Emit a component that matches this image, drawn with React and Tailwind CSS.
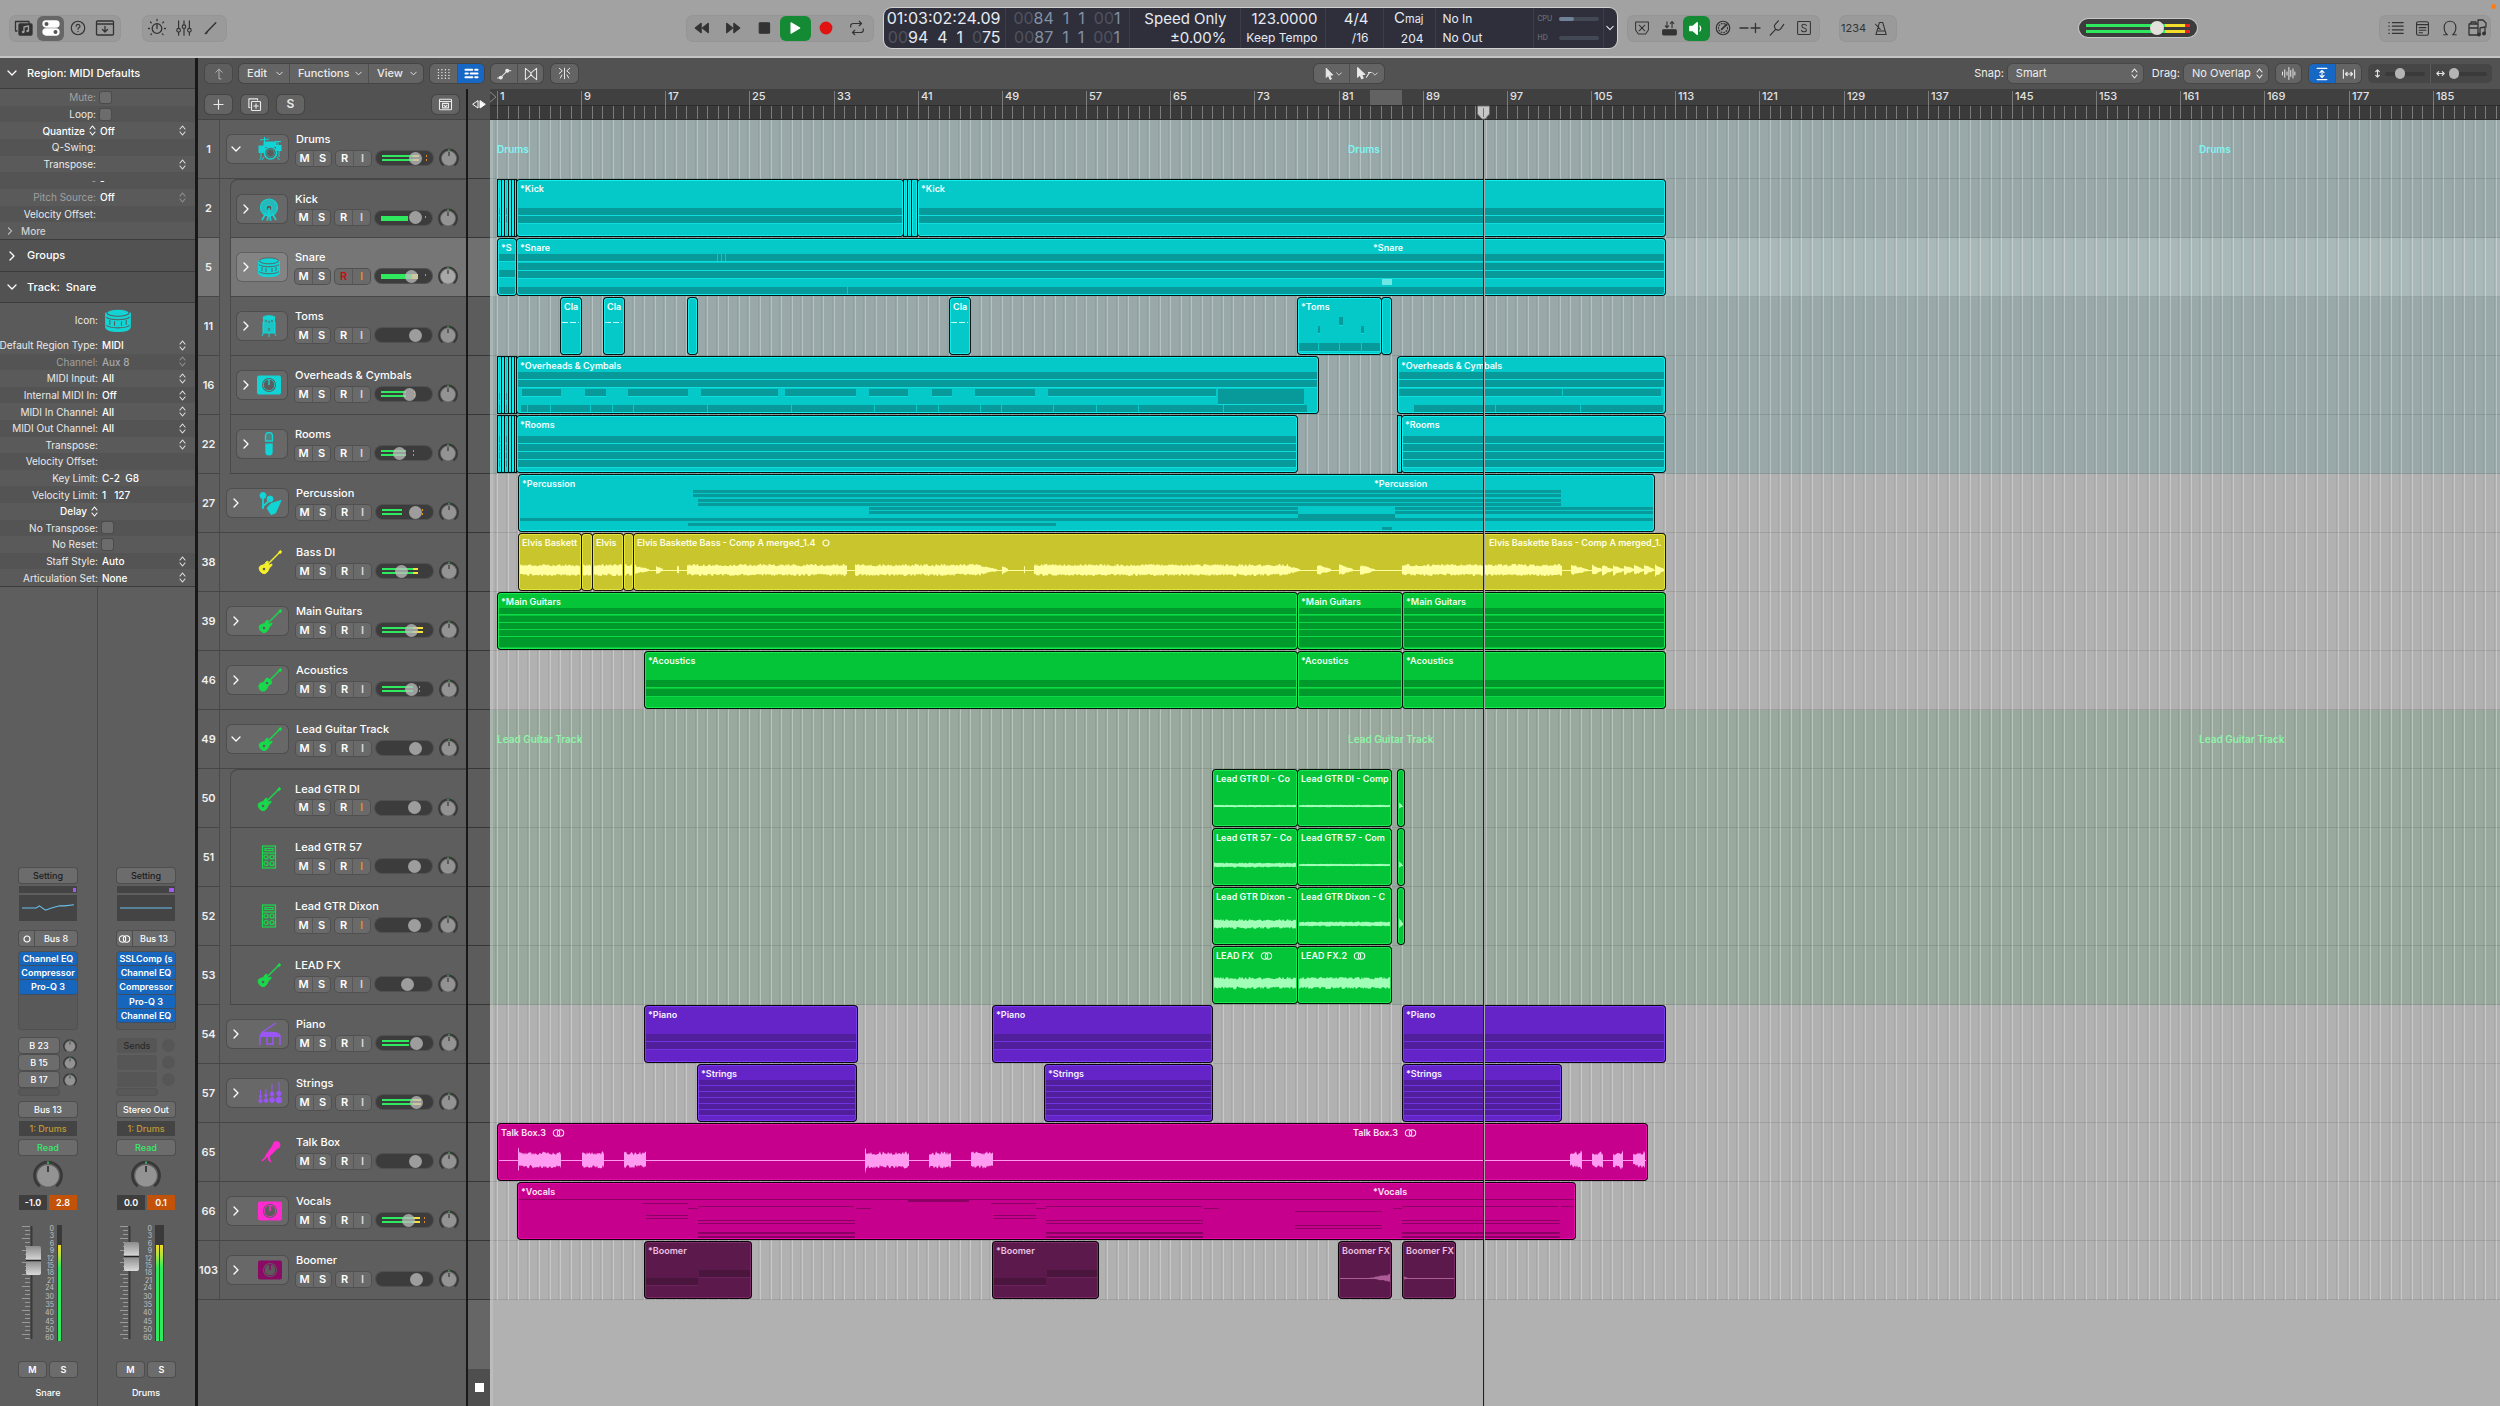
import React from "react";

/* ---------- timeline geometry ---------- */
const BAR = 10.52;
const barX = (b) => Math.round(7 + (b - 1) * BAR);
const BARS = Array.from({ length: 191 }, (_, i) => i + 1);
const TILE = 851;

/* ---------- small glyphs ---------- */
const S = ({ w = 16, h, vb, className = "", sw = 1.3, children }) => (
  <svg width={w} height={h || w} viewBox={vb || "0 0 20 20"} className={"shrink-0 " + className} fill="none" stroke="currentColor" strokeWidth={sw} strokeLinecap="round" strokeLinejoin="round" aria-hidden="true">
    {children}
  </svg>
);
const ChevD = ({ w = 10, className }) => <S w={w} vb="0 0 10 10" className={className}><path d="M1 3l4 4 4-4" /></S>;
const ChevR = ({ w = 10, className }) => <S w={w} vb="0 0 10 10" className={className}><path d="M3 1l4 4-4 4" /></S>;
const UpDown = ({ className }) => <S w={7} h={11} vb="0 0 7 11" sw={1.1} className={className}><path d="M1 4l2.500-3L6 4M1 7l2.500 3L6 7" /></S>;
const Stereo = () => <S w={13} h={8} vb="0 0 13 8" sw={1.1}><circle cx="4.500" cy="4" r="3.200" /><circle cx="8.500" cy="4" r="3.200" /></S>;
const Mono = () => <S w={8} h={8} vb="0 0 8 8" sw={1.2}><circle cx="4" cy="4" r="3" /></S>;

const G = {
  library: <S w={20}><path d="M3 13H1.500V3.500H15V6" /><rect x="5" y="6" width="13" height="11" rx="1" fill="currentColor" /><path d="M10 14V9l4.500-1v5" stroke="#a0a0a0" /><circle cx="9" cy="14" r="1.200" fill="#a0a0a0" stroke="none" /><circle cx="13.500" cy="13" r="1.200" fill="#a0a0a0" stroke="none" /></S>,
  inspector: <S w={20}><rect x="2" y="3" width="16" height="6" rx="3" fill="currentColor" /><circle cx="5.500" cy="6" r="2" fill="#555" stroke="none" /><rect x="2" y="11" width="16" height="6" rx="3" fill="currentColor" /><circle cx="14.500" cy="14" r="2" fill="#555" stroke="none" /></S>,
  help: <S w={18}><circle cx="10" cy="10" r="7.500" /><path d="M8 8c0-2.800 4.200-2.600 4.200 0 0 1.500-2.200 1.600-2.200 3.300M10 13.800v.200" /></S>,
  toolbar: <S w={20}><rect x="1.500" y="3" width="17" height="14" rx="1" /><path d="M2 6h16M10 8.500v5M7.500 11.500l2.500 2.500 2.500-2.500" /></S>,
  dial: <S w={20}><circle cx="10" cy="10.500" r="4.800" /><path d="M10 6v4.500M10 1.500v1M16.500 4l-.700.700M3.500 4l.700.700M18.500 10.500h-1M1.500 10.500h1M16 16.500l-.600-.600M4 16.500l.600-.600" /></S>,
  mixer: <S w={18}><path d="M4 2v8M4 15v3M10 2v4M10 11v7M16 2v8M16 15v3" /><circle cx="4" cy="12.500" r="2" /><circle cx="10" cy="8.500" r="2" /><circle cx="16" cy="12.500" r="2" /></S>,
  pencil: <S w={16} sw={1.800}><path d="M3 17L16 3.500M3 17l2-1" /></S>,
  rew: <S w={16}><path d="M9 4v12L1.500 10zM18 4v12L10.500 10z" fill="currentColor" /></S>,
  ffw: <S w={16}><path d="M11 4v12l7.500-6zM2 4v12l7.500-6z" fill="currentColor" /></S>,
  stop: <S w={16}><rect x="4" y="3.500" width="13" height="13" rx="1" fill="currentColor" /></S>,
  play: <S w={16}><path d="M5 3.500v13L16 10z" fill="currentColor" /></S>,
  rec: <S w={16}><circle cx="10" cy="10" r="8" fill="#e01212" stroke="none" /></S>,
  cycle: <S w={18}><path d="M3 9V7.500Q3 5 6 5h9M12.500 2.500L15 5l-2.500 2.500M17 11v1.500q0 2.500-3 2.500H5M7.500 12.500L5 15l2.500 2.500" /></S>,
  replace: <S w={16}><path d="M2 2.500h16v10l-3.500 5h-9L2 12.500zM6.500 6.500l7 7M13.500 6.500l-7 7" /></S>,
  input: <S w={17}><rect x="2" y="11.500" width="16" height="6" rx="1" fill="currentColor" /><path d="M7 2v7M5 7l2 2 2-2M13 9V2M11 4l2-2 2 2" /></S>,
  speaker: <S w={17}><path d="M2 7.500h3.500L11 3v14l-5.500-4.500H2z" fill="currentColor" /><path d="M14 7q2 3 0 6" /></S>,
  tuner: <S w={18}><circle cx="10" cy="10" r="7.500" /><circle cx="10" cy="10" r="5" strokeDasharray="1 2" /><path d="M8.500 11.500L14 6" strokeWidth="2" /></S>,
  plusminus: <S w={22} h={16} vb="0 0 22 16"><path d="M1 8h8M12 8h9M16.500 3.500v9" /></S>,
  fork: <S w={18}><path d="M2.500 18l6-6.500M8.500 11.500Q6 8 8 6l3.500-4M8.500 11.500q3.500 2 5.500-.500L17.500 6" /></S>,
  solo: <S w={16}><rect x="2" y="2" width="16" height="16" rx="1" /><path d="M13 7q-1-1.800-3-1.800c-3.500 0-3.500 4.200 0 4.700 4 .600 4 4.900 0 4.900q-2.400 0-3.200-2" /></S>,
  metro: <S w={17}><path d="M7.500 3h4l4 14h-12zM6 13h8M8.500 11L3 5" /></S>,
  list: <S w={18}><path d="M2 4h.500M2 8h.500M2 12h.500M2 16h.500M6 4h12M6 8h12M6 12h12M6 16h12" /></S>,
  note: <S w={17}><rect x="3" y="2" width="14" height="16" rx="2" /><path d="M3.500 5.500h13M6 9h8M6 12h8M6 15h4" /></S>,
  loop: <S w={18}><path d="M3 17.500h4Q3.500 14.500 3.500 9.500C3.500 5 6.500 2.500 10 2.500s6.500 2.500 6.500 7q0 5-3.500 8h4" /></S>,
  browser: <S w={20}><path d="M2 6h9v11H2zM4 6V4h5v2M11 5V2h5l3 3v4M2 10h9" /><path d="M13 16V10l5-1v6" /><circle cx="12" cy="16.500" r="1.300" fill="currentColor" /><circle cx="17" cy="15.500" r="1.300" fill="currentColor" /></S>,
  up: <S w={14}><path d="M13 17h-3V3M5.500 7.500L10 3l4.500 4.500" /></S>,
  grid: <S w={14} sw={2}><path d="M2 4h.1M7 4h.1M12 4h.1M17 4h.1M2 8h.1M7 8h.1M12 8h.1M17 8h.1M2 12h.1M7 12h.1M12 12h.1M17 12h.1M2 16h.1M7 16h.1M12 16h.1M17 16h.1" /></S>,
  blocks: <S w={15} sw={2.800}><path d="M2 5h9M15 5h3M2 10h3M9 10h9M2 15h9M15 15h3" /></S>,
  auto: <S w={16}><path d="M2 15h3.500L14 6h4.500" /><circle cx="6" cy="14.500" r="1.800" fill="currentColor" /><circle cx="14" cy="6" r="1.800" fill="currentColor" /></S>,
  flex: <S w={16}><path d="M3 3v14M17 3v14M3 3q7 5 7 7t-7 7M17 3q-7 5-7 7t7 7" /></S>,
  catch: <S w={15}><path d="M10 3v14M3 3l4 3.500L3 10M17 3l-4 3.500 4 3.500M6.500 12l-2 4M13.500 12l2 4" /></S>,
  arrow: <S w={14}><path d="M6 2v13l3-3 2.500 6 2-1-2.500-5.500h4z" fill="currentColor" /></S>,
  marquee: <S w={16}><path d="M2 2v12l3-3 2 5 2-1-2-4.500h4z" fill="currentColor" /><path d="M13 14l4-6M15.500 8H19" /></S>,
  wave: <S w={15}><path d="M2 8v4M5 5v10M8 8v4M10.500 2v16M13 6v8M16 4v12M18.500 8v4" /></S>,
  vzoom: <S w={14} sw={1.600}><path d="M3 2h14M3 18h14M10 5v10M7 8l3-3 3 3M7 12l3 3 3-3" /></S>,
  hzoom: <S w={14} sw={1.600}><path d="M2 4v12M18 4v12M5 10h10M7.500 7.500L5 10l2.500 2.500M12.500 7.500L15 10l-2.500 2.500" /></S>,
  plus: <S w={13} sw={1.800}><path d="M10 3v14M3 10h14" /></S>,
  dup: <S w={15} sw={1.500}><path d="M4 14H2.500V2.500H14V4" /><rect x="6" y="6" width="12" height="12" rx="1" /><path d="M12 9v6M9 12h6" /></S>,
  hide: <S w={15} sw={1.500}><rect x="2" y="3" width="16" height="14" rx="1" /><path d="M2 6h16" /><rect x="6" y="8.500" width="8" height="6" /><path d="M8 11l2 2 2-2" /></S>,
};

/* ---------- instrument drawings ---------- */
const Inst = ({ kind, color, big }) => {
  const p = { fill: color, stroke: color };
  const hole = "#5c5c5c";
  let d = null;
  if (kind === "kit") d = (<g {...p} strokeWidth="1"><path d="M2 3l9-1M6.500 0v5M17 4.500h6M20 5v4" fill="none" /><rect x="6" y="5" width="5.500" height="4.500" /><rect x="12.500" y="5" width="5.500" height="4.500" /><rect x="1" y="9" width="6" height="6.500" /><rect x="18.500" y="8.500" width="4.500" height="5" /><circle cx="12.500" cy="16" r="6" fill={hole} strokeWidth="1.600" /><circle cx="12.500" cy="16" r="4" fill="none" strokeWidth=".5" /><path d="M3 16v5l-1.500 2M6 20l-2 3M19 20l2.500 3M21 13v7" fill="none" /></g>);
  if (kind === "kick") d = (<g {...p}><circle cx="12" cy="10.500" r="8.500" fillOpacity=".75" strokeWidth="1.200" /><circle cx="12" cy="11" r="3" fill={hole} /><path d="M12 11v9M9 16l-4 7M15 16l4 7M9.500 23h1l1-6h1l1 6h1" fill="none" strokeWidth="1.700" /></g>);
  if (kind === "snare") d = (<g {...p}><path d="M1.500 6v12c0 5 21 5 21 0V6z" /><path d="M2 9.500c3 3 17 3 20 0M2 16.500c3 3 17 3 20 0M5 12v4M9 13v4M15 13v4M19 12v4" stroke={hole} fill="none" strokeWidth=".9" /><ellipse cx="12" cy="5.800" rx="9.500" ry="3" stroke={hole} strokeWidth=".9" /></g>);
  if (kind === "tom") d = (<g {...p}><rect x="6.500" y="4" width="11" height="15" fillOpacity=".85" /><ellipse cx="12" cy="3.500" rx="6" ry="1.800" /><path d="M9 6v2M12 7v2M12 14v3M15 6v2" stroke={hole} /><path d="M6 8v12l-1 2M18 8v12l1 2M12 19v4" fill="none" /></g>);
  if (kind === "knob") d = (<g><rect x="0" y="2.500" width="24" height="19" rx="2" fill={color} /><circle cx="12" cy="12" r="7" fill={hole} /><circle cx="12" cy="12" r="5.700" fill={hole} stroke={color} strokeWidth=".8" /><path d="M12 6.500V12" stroke={color} strokeWidth="1.500" /></g>);
  if (kind === "mic") d = (<g {...p}><path d="M8.500 9V4q0-3.500 3.500-3.500T15.500 4v5z" fillOpacity=".25" strokeWidth="1.300" /><path d="M8.300 11.500h7.400V20q0 3.500-3.700 3.500T8.300 20z" stroke="none" /></g>);
  if (kind === "perc") d = (<g {...p}><circle cx="5" cy="4.500" r="3" /><circle cx="12" cy="8" r="3" /><path d="M5 7v11M11 10l-7 6" strokeWidth="1.800" /><path d="M9 17l4-4.500 10-3-5.500 12.500-4.500 1.500z" /></g>);
  if (kind === "guitar" || kind === "acoustic") d = (<g {...p}><path d="M9 15L22 2" strokeWidth="1.500" /><path d="M20.500 2l2-1.500 1.200 1.200-1.500 2z" /><path d={kind === "guitar" ? "M1 18q1-3 4-3 2 0 3-3l2-1-.500 3 2 1 2.500-1q.500 2-2 3-1.500 2-2 4-2 3.500-5 2.500Q1.500 22 1 18z" : "M.800 18q.500-3.500 4-3.500 2 0 2.500-3 1.500-2.500 4-.500t2.500 3.500q-.500 2-3 2.500-1.500 2-2 4-2 3-5 2T.800 18z"} /><circle cx={kind === "guitar" ? 6 : 9} cy={kind === "guitar" ? 19 : 15} r="1.300" fill={hole} stroke="none" /></g>);
  if (kind === "amp") d = (<g {...p} strokeWidth="1.200"><rect x="5.500" y="1" width="13" height="22" fillOpacity=".15" /><path d="M5 8h14" /><path d="M8 3.500h8v2H8z" fill="none" /><circle cx="9" cy="12" r="2" fill="none" /><circle cx="15" cy="12" r="2" fill="none" /><circle cx="9" cy="18.500" r="2" fill="none" /><circle cx="15" cy="18.500" r="2" fill="none" /></g>);
  if (kind === "piano") d = (<g {...p}><path d="M3 11L18 1M7 10.500h7M2 14v9M22 13v10M9 15v8M15 15v8M9 22h6" fill="none" strokeWidth="1.500" /><path d="M2 12l3-2h13l4 2v3H2z" stroke="none" /></g>);
  if (kind === "strings") d = (<g {...p}><path d="M2.500 9v12M8 8v12M14 3v17M21 1v19" strokeWidth="1" /><circle cx="2.500" cy="15.500" r="1.200" /><circle cx="2.500" cy="20" r="1.700" /><circle cx="8" cy="14.500" r="1.300" /><circle cx="8" cy="19.500" r="1.900" /><circle cx="14" cy="13" r="1.900" /><circle cx="14" cy="19" r="2.400" /><circle cx="21" cy="12.500" r="2.200" /><circle cx="21" cy="19" r="2.900" /></g>);
  if (kind === "vox") d = (<g {...p}><circle cx="18.500" cy="5" r="3.500" /><path d="M15 6l3 3-8 8-2-1zM10 15l-6 6M11 14v6l2 2" strokeWidth="1.700" /></g>);
  return <svg width={big ? 28 : 24} height={big ? 28 : 24} viewBox="0 0 24 24" className="shrink-0" aria-hidden="true">{d}</svg>;
};

/* ---------- palettes ---------- */
const PAL = {
  cyan: { fill: "#05c9c9", dark: "#089a9a", light: "#14ecec", wave: "#c4ffff", text: "#f4ffff", icon: "#12d4d4" },
  yellow: { fill: "#c8c62c", dark: "#9d9b1c", light: "#e6e43a", wave: "#ffffa2", text: "#ffffe6", icon: "#f4ee2a" },
  green: { fill: "#04c437", dark: "#00992b", light: "#16ea50", wave: "#a2ffb8", text: "#f0fff2", icon: "#19d84b" },
  purple: { fill: "#6524c8", dark: "#511f9c", light: "#7a3cee", wave: "#d0b4ff", text: "#f6f0ff", icon: "#9a55f5" },
  pink: { fill: "#c6008c", dark: "#8c0065", light: "#e60aa6", wave: "#ff9cf2", text: "#ffe6f8", icon: "#ff2bd0" },
  plum: { fill: "#5c1a4c", dark: "#4a163e", light: "#7c2a68", wave: "#ac5c96", text: "#ecc0e2", icon: "#8a0a66" },
};

/* ---------- note bands: [x, y, width, height], x in timeline pixels ---------- */
const W = 4000;
const full = (ys, h = 7) => ys.map((y) => [0, y, W, h]);
const split = (stops, y, h) => stops.slice(0, -1).map((s, i) => [s + 1, y, stops[i + 1] - s - 1, h]);
const slivers = [[7, 4], [11, 3], [14, 4], [18, 3], [21, 3], [24, 2]];

const kickN = full([29, 37]);
const snareN = [...full([16, 25, 33]), ...full([49])];
const ohN = [...full([16, 24]),
  ...[[31, 70], [94, 115], [137, 197], [210, 287], [294, 365], [378, 417], [441, 461], [484, 544], [557, 725]].map(([a, b]) => [a, 33, b - a, 7]),
  [727, 33, 86, 15], ...split([29, 36, 59, 99, 121, 142, 216, 300, 383, 425, 447, 489, 510, 562, 605, 647, 732, 816], 49, 7)];
const oh2N = [...full([16, 24]), ...split([907, 1071, 1170], 33, 7), ...split([922, 1004, 1089, 1172], 49, 7)];
const roomN = full([21, 29, 37, 45]);
const percN = [[202, 16, 868, 3], [202, 20, 868, 3], [207, 25, 863, 3], [207, 29, 863, 3],
  [378, 33, 429, 3], [378, 37, 429, 3], [904, 33, 300, 3], [904, 37, 300, 3], [807, 40, 97, 4], [0, 44, W, 3], [197, 49, 368, 3], [891, 53, 10, 3]];
const mainN = full([16, 24, 31, 38, 45, 51], 6).map(([x, y, w], i) => [x, y, w, i === 5 ? 4 : 6]);
const acN = full([29, 38]);
const pianoN = full([29, 37]);
const strN = full([16, 22, 28, 34, 40, 46], 5);
const vocPhrase = (o) => [[o, 21, 45, 1], [o + 3, 33, 42, 1], [o + 3, 36, 42, 1], [o + 45, 26, 10, 1], [o + 55, 24, 156, 1], [o + 55, 38, 157, 1], [o + 55, 41, 157, 1], [o + 55, 50, 157, 2], [o + 55, 54, 157, 2], [o + 213, 26, 15, 1]];
const vocN = [[0, 17, W, 1], ...vocPhrase(152), [417, 18, 61, 2], ...vocPhrase(500), [804, 29, 87, 1], [804, 43, 87, 1], [804, 46, 87, 1], [902, 26, 9, 1],
  [911, 24, 156, 1], [911, 38, 158, 1], [911, 41, 158, 1], [911, 50, 158, 2], [911, 54, 158, 2], [1070, 24, 15, 1]];
const tomN = [[848, 20, 4, 8], [827, 29, 2, 7], [870, 29, 3, 7], ...split([807, 827, 848, 870, 890], 46, 8)];
const boomN = (o) => [[o, 37, 52, 7], [o + 53, 29, 54, 7]];

/* ---------- wave segments: [x0, x1, startAmp, endAmp] ---------- */
const bassW = [[29, 145, 5, 5], [145, 158, 4, 1], [165, 172, 4, 1], [186, 188, 4, 4], [196, 356, 5, 5], [364, 490, 5, 5], [490, 506, 4, 1], [511, 517, 4, 1], [533, 534, 4, 4],
  [543, 797, 5, 5], [797, 809, 4, 1], [826, 840, 5, 1], [848, 862, 5, 1], [869, 884, 5, 1], [911, 1071, 5, 5], [1080, 1097, 5, 1], [1101, 1111, 5, 1], [1111, 1122, 5, 1], [1122, 1133, 5, 1], [1133, 1143, 5, 1], [1143, 1153, 5, 1], [1153, 1163, 5, 1], [1164, 1173, 6, 1]];
const talkW = [[27, 28, 13, 13], [27, 70, 7, 7], [91, 113, 7, 7], [133, 155, 7, 7], [374, 375, 13, 13], [374, 418, 7, 7], [438, 460, 7, 7], [480, 502, 7, 7], [1079, 1091, 6, 8], [1101, 1112, 6, 7], [1122, 1132, 6, 8], [1142, 1154, 5, 8]];

const R = (x0, x1, label, extra = {}) => ({ x0, x1, label, ...extra });
const sl = (notes) => slivers.map(([x, w]) => R(x, x + w, "", { notes, thin: true }));

const TRACKS = [
  { n: 1, name: "Drums", icon: "kit", pal: "cyan", open: true, knob: 39, g: 37, y: 43, dot: 50, tint: "cyan", stack: "Drums", regions: [] },
  { n: 2, name: "Kick", icon: "kick", pal: "cyan", child: 1, arrow: true, knob: 41, g: 33, mono: true, dot: 50, tint: "cyan", regions: [...sl(kickN), R(26, 413, "*Kick", { notes: kickN }), R(413, 417, "", { thin: true }), R(417, 421, "", { thin: true }), R(421, 427, "", { thin: true }), R(427, 1175, "*Kick", { notes: kickN })] },
  { n: 5, name: "Snare", icon: "snare", pal: "cyan", child: 1, arrow: true, sel: true, knob: 37, g: 37, y: 43, mono: true, dot: 50, tint: "sel", regions: [R(7, 26, "*S", { notes: full([16, 32, 49]) }), R(26, 1175, "*Snare", { notes: snareN, again: [883, "*Snare"], lite: [[891, 41, 10, 6], [226, 16, 1, 7], [230, 16, 1, 7], [234, 16, 1, 7], [356, 49, 1, 7]] })] },
  { n: 11, name: "Toms", icon: "tom", pal: "cyan", child: 1, arrow: true, knob: 41, tint: "cyan", regions: [R(70, 91, "Cla", { dash: true }), R(113, 134, "Cla", { dash: true }), R(197, 207, ""), R(459, 480, "Cla", { dash: true }), R(807, 891, "*Toms", { notes: tomN }), R(891, 901, "")] },
  { n: 16, name: "Overheads & Cymbals", icon: "knob", pal: "cyan", child: 1, arrow: true, knob: 34, g: 31, dot: 39, tint: "cyan", regions: [...sl(full([37, 49])), R(26, 828, "*Overheads & Cymbals", { notes: ohN }), R(907, 1175, "*Overheads & Cymbals", { notes: oh2N })] },
  { n: 22, name: "Rooms", icon: "mic", pal: "cyan", child: 1, arrow: true, knob: 24, g: 31, dot: 38, tint: "cyan", regions: [...sl(roomN), R(26, 807, "*Rooms", { notes: roomN }), R(907, 911, "", { thin: true }), R(911, 1175, "*Rooms", { notes: roomN })] },
  { n: 27, name: "Percussion", icon: "perc", pal: "cyan", arrow: true, knob: 39, g: 26, dot: 46, regions: [R(28, 1164, "*Percussion", { notes: percN, again: [884, "*Percussion"] })] },
  { n: 38, name: "Bass DI", icon: "guitar", pal: "yellow", knob: 25, g: 37, y: 42, regions: [R(28, 91, "Elvis Baskett", { wave: bassW }), R(91, 102, "", { wave: bassW }), R(102, 133, "Elvis", { wave: bassW }), R(133, 143, "", { wave: bassW }), R(143, 1175, "Elvis Baskette Bass - Comp A merged_1.4", { wave: bassW, mark: "mono", again: [999, "Elvis Baskette Bass - Comp A merged_1."] })] },
  { n: 39, name: "Main Guitars", icon: "guitar", pal: "green", arrow: true, knob: 35, g: 37, y: 47, regions: [R(7, 807, "*Main Guitars", { notes: mainN }), R(807, 912, "*Main Guitars", { notes: mainN }), R(912, 1175, "*Main Guitars", { notes: mainN })] },
  { n: 46, name: "Acoustics", icon: "acoustic", pal: "green", arrow: true, knob: 35, g: 37, dot: 43, regions: [R(154, 807, "*Acoustics", { notes: acN }), R(807, 912, "*Acoustics", { notes: acN }), R(912, 1175, "*Acoustics", { notes: acN })] },
  { n: 49, name: "Lead Guitar Track", icon: "guitar", pal: "green", open: true, knob: 39, tint: "green", stack: "Lead Guitar Track", regions: [] },
  { n: 50, name: "Lead GTR DI", icon: "guitar", pal: "green", child: 1, knob: 39, hotI: true, tint: "green", regions: [R(722, 807, "Lead GTR DI - Co", { wave: [[722, 807, 1, 1]] }), R(807, 901, "Lead GTR DI - Comp", { wave: [[807, 902, 1, 1]] }), R(907, 914, "", { wave: [[908, 911, 3, 1]] })] },
  { n: 51, name: "Lead GTR 57", icon: "amp", pal: "green", child: 1, knob: 39, hotI: true, tint: "green", regions: [R(722, 807, "Lead GTR 57 - Co", { wave: [[722, 807, 2, 2]] }), R(807, 901, "Lead GTR 57 - Com", { wave: [[807, 902, 1, 1]] }), R(907, 914, "", { wave: [[908, 911, 3, 1]] })] },
  { n: 52, name: "Lead GTR Dixon", icon: "amp", pal: "green", child: 1, knob: 39, hotI: true, tint: "green", regions: [R(722, 807, "Lead GTR Dixon -", { wave: [[722, 807, 4, 4]] }), R(807, 901, "Lead GTR Dixon - C", { wave: [[807, 902, 2, 2]] }), R(907, 914, "", { wave: [[908, 912, 5, 1]] })] },
  { n: 53, name: "LEAD FX", icon: "guitar", pal: "green", child: 1, knob: 32, tint: "green", regions: [R(722, 807, "LEAD FX", { mark: "stereo", wave: [[723, 807, 5, 5]] }), R(807, 901, "LEAD FX.2", { mark: "stereo", wave: [[807, 901, 5, 5]] })] },
  { n: 54, name: "Piano", icon: "piano", pal: "purple", arrow: true, knob: 41, g: 33, regions: [R(154, 367, "*Piano", { notes: pianoN }), R(502, 722, "*Piano", { notes: pianoN }), R(912, 1175, "*Piano", { notes: pianoN })] },
  { n: 57, name: "Strings", icon: "strings", pal: "purple", arrow: true, knob: 41, g: 37, y: 45, regions: [R(207, 366, "*Strings", { notes: strN }), R(554, 722, "*Strings", { notes: strN }), R(912, 1071, "*Strings", { notes: strN })] },
  { n: 65, name: "Talk Box", icon: "vox", pal: "pink", knob: 39, regions: [R(7, 1157, "Talk Box.3", { mark: "stereo", wave: talkW, again: [863, "Talk Box.3"], again2: true })] },
  { n: 66, name: "Vocals", icon: "knob", pal: "pink", arrow: true, knob: 33, g: 37, y: 44, dot: 48, regions: [R(27, 1085, "*Vocals", { notes: vocN, again: [883, "*Vocals"] })] },
  { n: 103, name: "Boomer", icon: "knob", pal: "plum", arrow: true, knob: 41, regions: [R(154, 261, "*Boomer", { notes: boomN(155) }), R(502, 608, "*Boomer", { notes: boomN(503) }), R(848, 901, "Boomer FX", { wave: [[878, 901, 0, 4]] }), R(912, 965, "Boomer FX", { wave: [[912, 917, 2, 0]] })] },
];

/* ---------- regions ---------- */
const noise = (i) => {
  const v = Math.sin(i * 127.1 + 31.7) * 43758.5453;
  return v - Math.floor(v);
};
function wavePath(segs, x0, x1) {
  let d = "";
  segs.forEach(([a, b, p, q]) => {
    const s = Math.max(a, x0), e = Math.min(b, x1);
    if (e <= s) return;
    const top = [], bot = [];
    for (let x = s; x <= e; x++) {
      const t = b > a ? (x - a) / (b - a) : 0;
      const amp = p + (q - p) * t;
      top.push(`${x - x0},${(36 - amp * (0.7 + 0.55 * noise(x))).toFixed(1)}`);
      bot.unshift(`${x - x0},${(36 + amp * (0.7 + 0.55 * noise(x + 900))).toFixed(1)}`);
    }
    d += "M" + top.concat(bot).join("L") + "Z";
  });
  return d;
}

function Region({ r, pal }) {
  const c = PAL[pal];
  const w = r.x1 - r.x0;
  return (
    <div className={"absolute top-0 h-[58px] overflow-hidden border border-black/90 " + (r.thin ? "" : "rounded")} style={{ left: r.x0, width: w + 1, background: c.fill }}>
      <svg className="absolute inset-0" width={w} height="56" aria-hidden="true">
        {(r.notes || []).map(([x, y, nw, h], i) => {
          const s = Math.max(x - r.x0, 0);
          const e = Math.min(x + nw - r.x0, w);
          return e > s ? (
            <g key={i}>
              <rect x={s} y={y - 1} width={e - s} height={h} fill={c.dark} />
              {h > 4 && <rect x={s} y={y + h - 1} width={e - s} height="1" fill={c.light} opacity=".6" />}
            </g>
          ) : null;
        })}
        {(r.lite || []).map(([x, y, nw, h], i) => <rect key={i} x={x - r.x0} y={y - 1} width={nw} height={h} fill={nw > 4 ? "#6fe6e6" : c.fill} />)}
        {r.dash && <path d={`M1 24.500H${w - 3}`} stroke={c.wave} strokeDasharray="6 2" />}
        {r.wave && (
          <g>
            <path d={`M0 36.500H${w}`} stroke={c.wave} />
            <path d={wavePath(r.wave, r.x0, r.x1)} fill={c.wave} />
          </g>
        )}
      </svg>
      <div className="absolute inset-0 rounded-[3px] border" style={{ borderColor: c.light }} />
      {r.label && (
        <div className="relative flex items-center gap-1.5 whitespace-nowrap pl-[3px] pt-0.5 text-[9px] font-semibold leading-[13px]" style={{ color: c.text }}>
          <span>{r.label}</span>
          {r.mark === "mono" && <Mono />}
          {r.mark === "stereo" && <Stereo />}
        </div>
      )}
      {r.again && (
        <div className="absolute top-0 flex items-center gap-1.5 whitespace-nowrap pt-0.5 text-[9px] font-semibold leading-[13px]" style={{ left: r.again[0] - r.x0 - 1, color: c.text }}>
          <span>{r.again[1]}</span>
          {r.again2 && <Stereo />}
        </div>
      )}
    </div>
  );
}

/* ---------- track header ---------- */
const thumb = "absolute inset-0 m-0 h-full w-full appearance-none bg-transparent [&::-webkit-slider-thumb]:h-[13px] [&::-webkit-slider-thumb]:w-[13px] [&::-webkit-slider-thumb]:appearance-none [&::-webkit-slider-thumb]:rounded-full [&::-webkit-slider-thumb]:bg-[#bdbdbd]/75";

function Volume({ t }) {
  const lanes = t.mono ? [5] : [4, 8];
  return (
    <div className="relative h-[14px] w-[57px] overflow-hidden rounded-full bg-[#3c3c3c] ring-1 ring-[#505050]">
      {t.g && lanes.map((y) => (
        <div key={y} className={"absolute left-[6px] flex " + (t.mono ? "h-[5px]" : "h-[2px]")} style={{ top: y, width: (t.y || t.g) - 6 }}>
          <div className="bg-[#2fe95f]" style={{ width: t.g - 6 }} />
          <div className="flex-1 bg-[#f5e23a]" />
        </div>
      ))}
      {t.dot && lanes.map((y) => <div key={y} className="absolute h-[2px] w-px bg-[#e88a1e]" style={{ left: t.dot, top: y }} />)}
      <input type="range" aria-label={t.name + " volume"} min="0" max="100" step="any" defaultValue={((t.knob - 6.5) / 44) * 100} className={thumb} />
    </div>
  );
}

const Knob = ({ size = 20, sel }) => (
  <svg width={size} height={size} viewBox="0 0 20 20" className="shrink-0" aria-hidden="true">
    <path d="M4.500 17.500A9 9 0 1 1 15.500 17.500" fill="none" stroke="#383838" strokeWidth="1.800" />
    <circle cx="10" cy="10.500" r="7.200" fill={sel ? "#a8a8a8" : "#939393"} />
    <path d="M10 4v4" stroke="#222" strokeWidth="1" />
    <path d="M10 1v1.500" stroke="#3ad15f" strokeWidth="1" />
  </svg>
);

function Pair({ a, b, ca = "text-white", cb = "text-white" }) {
  return (
    <div className="flex h-[15px] w-[35px] overflow-hidden rounded-[4px] bg-[#6a6a6a] text-[11px] font-semibold leading-[15px] ring-1 ring-[#505050]">
      <button className={"flex-1 " + ca}>{a}</button>
      <div className="w-px bg-[#575757]" />
      <button className={"flex-1 " + cb}>{b}</button>
    </div>
  );
}

function TrackHeader({ t, first }) {
  const bg = t.sel ? "bg-[#767676]" : "bg-[#5e5e5e]";
  const framed = t.arrow || t.open;
  return (
    <div className="flex h-[59px]">
      <div className={"flex w-[21px] shrink-0 items-center justify-center border-b border-[#464646] text-[11px] font-semibold text-[#f0f0f0] " + bg}>{t.n}</div>
      <div className={"flex flex-1 border-l border-[#4a4a4a] bg-[#5e5e5e] " + (t.child ? "" : "border-b border-b-[#464646]")}>
        {t.child && <div className="w-[10px] shrink-0" />}
        <div className={"flex min-w-0 flex-1 items-center " + (t.child ? "border-b border-l border-b-[#464646] border-l-[#4a4a4a] pl-[6px] " : "pl-[7px] ") + (first ? "rounded-tl-lg border-t border-t-[#464646] " : "") + bg}>
          <div className={"flex h-[28px] shrink-0 items-center justify-between rounded-[5px] pl-1 pr-1.5 " + (t.child ? "w-[50px] " : "w-[61px] ") + (framed ? (t.sel ? "bg-[#848484] ring-1 ring-[#606060]" : "bg-[#686868] ring-1 ring-[#4e4e4e]") : "")}>
            {framed ? <button aria-label={"Toggle " + t.name} className="text-white">{t.open ? <ChevD /> : <ChevR />}</button> : <span />}
            <Inst kind={t.icon} color={PAL[t.pal].icon} />
          </div>
          <div className="ml-[8px] flex flex-col gap-px pt-0.5">
            <div className="whitespace-nowrap text-[11px] font-medium leading-[15px] text-white">{t.name}</div>
            <div className="flex items-center gap-[5px]">
              <Pair a="M" b="S" />
              <Pair a="R" b="I" ca={t.sel ? "text-[#c01010]" : "text-white"} cb={t.sel || t.hotI ? "text-[#ec8a1c]" : "text-[#d8d8d8]"} />
              <Volume t={t} />
              <div className="ml-px flex"><Knob sel={t.sel} /></div>
            </div>
          </div>
        </div>
      </div>
    </div>
  );
}

/* ---------- inspector ---------- */
function Row({ label, value, spin, dim, check, labelSpin, wide }) {
  const id = React.useId();
  return (
    <div className="flex flex-1 items-center odd:bg-[#5a5a5a] even:bg-[#545454]">
      <label htmlFor={id} className={"flex shrink-0 items-center justify-end gap-1 whitespace-nowrap text-[10px] leading-none " + (wide ? "w-[98px] " : "w-[96px] ") + (dim ? "text-[#a0a0a0]" : labelSpin ? "font-medium text-white" : "text-[#eaeaea]")}>
        {label}
        {labelSpin && <UpDown />}
      </label>
      <div className="flex flex-1 items-center justify-between pl-1 pr-[9px] text-[10px] font-medium leading-none text-white">
        {check ? <input id={id} type="checkbox" className="h-[11px] w-[11px] appearance-none rounded-[2px] bg-[#6c6c6c] ring-1 ring-[#4c4c4c]" />
          : spin && value ? <select id={id} className={"appearance-none bg-transparent leading-none outline-none " + (dim === 2 ? "text-[#a8a8a8]" : "")}><option>{value}</option></select>
          : <output id={id} className="whitespace-pre">{value}</output>}
        {spin && <UpDown className={dim ? "text-[#909090]" : "text-[#e0e0e0]"} />}
      </div>
    </div>
  );
}

function Heading({ open, h = "h-[31px]", children }) {
  return (
    <button className={"flex w-full items-center gap-[10px] border-b border-[#3c3c3c] bg-[#525252] pl-[7px] text-left text-[11px] font-medium text-white " + h}>
      {open ? <ChevD /> : <ChevR />}
      <span className="whitespace-pre">{children}</span>
    </button>
  );
}

const Btn = ({ children, className = "", tone = "text-white" }) => (
  <button className={"flex h-[15px] items-center justify-center overflow-hidden whitespace-nowrap rounded-[3px] bg-[#6c6c6c] text-[9px] font-medium ring-1 ring-[#4e4e4e] " + tone + " " + className}>{children}</button>
);

const DB = [["0", "3", "6", "9", "12", "15", "18", "21", "24"], ["30", "35", "40", "45", "50", "60"]];

function Strip({ s }) {
  return (
    <section className="flex flex-1 flex-col border-r border-[#4a4a4a] pl-[19px] pr-[20px] last:border-r-0">
      <Btn className="mt-[281px]" tone="text-[#1c1c1c]">Setting</Btn>
      <div className="mt-[3px] flex h-[7px] items-center justify-end bg-[#444] pr-px"><div className={"h-[4px] bg-[#a05cf0] " + (s.stereo ? "w-[5px]" : "w-[3px]")} /></div>
      <svg className="mt-[2px] h-[26px] w-full bg-[#444]" viewBox="0 0 57 24" preserveAspectRatio="none" aria-hidden="true">
        <path d={s.stereo ? "M3 12h51" : "M3 12h14l3-2 6 4 6-2 8-2h5l9-1"} fill="none" stroke="#6cc0ee" />
      </svg>
      <div className="mt-[10px] flex h-[15px] overflow-hidden rounded-[3px] bg-[#6c6c6c] text-[9px] font-medium text-white ring-1 ring-[#4e4e4e]">
        <button aria-label="Format" className="flex w-[15px] items-center justify-center">{s.stereo ? <Stereo /> : <Mono />}</button>
        <button className="flex-1 border-l border-[#4e4e4e]">{s.input}</button>
      </div>
      <div className="mt-[6px] h-[77px] overflow-hidden rounded-[3px] bg-[#595959] ring-1 ring-[#505050]">
        <div className="grid h-[71px] grid-rows-5">
          {s.inserts.map((n, i) => <button key={i} className="flex items-center justify-center overflow-hidden whitespace-nowrap rounded-[3px] border-b border-[#3d4d63] bg-[#1766bd] text-[9px] font-semibold leading-none text-white">{n}</button>)}
        </div>
      </div>
      <div className="mt-[9px] flex flex-col gap-[2px]">
        {s.sends.map((n, i) => (
          <div key={i} className="flex items-center justify-between">
            {s.stereo ? <button className="h-[15px] w-[40px] rounded-[3px] bg-[#565656] text-[9px] font-medium text-[#2a2a2a]">{n}</button> : <Btn className="w-[40px]">{n}</Btn>}
            {s.stereo ? <div className="h-[13px] w-[13px] rounded-full bg-[#565656]" /> : <Knob size={14} />}
          </div>
        ))}
        <div className="h-[6px] w-[40px] rounded-[3px] bg-[#585858] ring-1 ring-[#525252]" />
      </div>
      <Btn className="mt-[7px]">{s.out}</Btn>
      <div className="mt-[4px] h-[15px] bg-[#444] text-center text-[9px] font-medium leading-[15px] text-[#c09a34]">1: Drums</div>
      <Btn className="mt-[4px]" tone="text-[#3bea6a]">Read</Btn>
      <div className="mt-[5px] flex justify-center"><Knob size={30} /></div>
      <div className="mt-[5px] grid grid-cols-2 gap-[2px] text-center text-[9px] font-semibold leading-[15px] text-white">
        <output className="bg-[#3e3e3e]">{s.vol}</output>
        <output className="bg-[#c2520a]">{s.peak}</output>
      </div>
      <div className="mt-[15px] flex h-[116px]">
        <div className="relative h-[116px] w-[24px]">
          <svg width="16" height="116" viewBox="0 0 16 116" className="absolute left-0 top-0" aria-hidden="true">
            <path d="M12.500 1v113" stroke="#3a3a3a" strokeWidth="2" />
            {Array.from({ length: 29 }, (_, i) => <path key={i} d={`M${i % 3 ? 6 : 3} ${i * 4 + 1.5}H11`} stroke="#9a9a9a" />)}
          </svg>
          <input type="range" aria-label={s.name + " fader"} min="0" max="100" step="any" defaultValue={s.fader} className="absolute left-[6px] top-0 m-0 h-[116px] w-[16px] appearance-none bg-transparent [direction:rtl] [writing-mode:vertical-lr] [&::-webkit-slider-thumb]:h-[29px] [&::-webkit-slider-thumb]:w-[15px] [&::-webkit-slider-thumb]:appearance-none [&::-webkit-slider-thumb]:rounded-[2px] [&::-webkit-slider-thumb]:bg-[linear-gradient(#8c8c8c,#d4d4d4_46%,#222_48%,#222_52%,#909090_54%,#dadada)]" />
        </div>
        <div className="flex w-[11px] flex-col justify-between text-right text-[7px] leading-[7px] text-[#c0c0c0]">
          {DB.map((part, k) => (
            <div key={k} className={"flex flex-col justify-between " + (k ? "h-[48px]" : "h-[66px]")}>
              {part.map((d) => <span key={d}>{d}</span>)}
            </div>
          ))}
        </div>
        <div className="ml-[3px] flex h-[116px] gap-px bg-[#3a3a3a] px-px pt-[20px]">
          {(s.stereo ? [0, 1] : [0]).map((i) => <div key={i} className="h-full w-[3px] bg-[linear-gradient(#f5d82a,#b8e23c_10%,#2fe95f_24%)]" />)}
        </div>
      </div>
      <div className="mt-[21px] grid grid-cols-2 gap-[4px]"><Btn className="font-semibold">M</Btn><Btn className="font-semibold">S</Btn></div>
      <div className="mb-1 mt-[9px] text-center text-[9px] font-medium leading-[14px] text-white">{s.name}</div>
    </section>
  );
}

/* ---------- top bar ---------- */
function Group({ items, cell, className = "" }) {
  return (
    <div className={"flex h-[25px] items-stretch rounded-[6px] bg-[#9a9a9a] text-[#333] ring-1 ring-[#959595] " + className}>
      {items.map(([k, on]) => (
        <button key={k} aria-label={k} className={"flex items-center justify-center rounded-[6px] " + cell + " " + (on || "")}>{G[k] || <span className="text-[11px]">{k}</span>}</button>
      ))}
    </div>
  );
}

const Dim = ({ children }) => <span className="text-[#50535f]">{children}</span>;
const cellL = "flex shrink-0 flex-col justify-center border-r border-[#3b3d49] leading-[19px] ";

function Lcd() {
  return (
    <div className="flex h-10 w-[733px] shrink-0 overflow-hidden whitespace-pre rounded-[8px] bg-[#2e2f3b] text-[15px] text-[#e6eaf2] ring-1 ring-[#d0d0d0]">
      <div className={cellL + "w-[122px] items-end pr-[4px] text-[16px]"}><span>01:03:02:24.09</span><span><Dim>00</Dim>94  4  1  <Dim>0</Dim>75</span></div>
      <div className={cellL + "w-[124px] items-center text-[16px] text-[#8290a4]"}><span><Dim>00</Dim>84  1  1  <Dim>00</Dim>1</span><span><Dim>00</Dim>87  1  1  <Dim>00</Dim>1</span></div>
      <div className={cellL + "w-[111px] items-end pr-[13px]"}><span>Speed Only</span><span>±0.00%</span></div>
      <div className={cellL + "w-[85px] items-end pr-[7px]"}><span>123.0000</span><span className="text-[12px]">Keep Tempo</span></div>
      <div className={cellL + "w-[58px] items-end pr-[14px]"}><span>4/4</span><span className="text-[12px]">/16</span></div>
      <div className={cellL + "w-[52px] items-end pr-[11px]"}><span>C<span className="text-[11px]">maj</span></span><span className="text-[12px]">204</span></div>
      <div className={cellL + "w-[98px] pl-[7px] text-[12px]"}><span>No In</span><span>No Out</span></div>
      <div className={cellL + "w-[70px] pl-1 text-[7px] text-[#727d8c]"}>
        <span className="flex items-center gap-1"><span className="w-[17px]">CPU</span><span className="h-[4px] w-[40px] rounded-full bg-[#434855]"><span className="block h-full w-[15px] rounded-full bg-[#6f8298]" /></span></span>
        <span className="flex items-center gap-1"><span className="w-[17px]">HD</span><span className="h-[4px] w-[40px] rounded-full bg-[#434855]" /></span>
      </div>
      <button aria-label="Display mode" className="flex flex-1 items-center justify-center"><ChevD w={8} /></button>
    </div>
  );
}

/* ---------- toolbar bits ---------- */
const tool = "flex h-[19px] items-stretch overflow-hidden rounded-[5px] bg-[#646464] text-[#eaeaea] ring-1 ring-[#454545] ";
const TB = ({ k, on, w = "w-[27px]" }) => <button aria-label={k} className={"flex items-center justify-center border-l border-[#505050] first:border-l-0 " + w + " " + (on ? "bg-[#1767c4] text-white" : "")}>{G[k]}</button>;

function Pick({ label, value, w }) {
  const id = React.useId();
  return (
    <div className="flex items-center gap-1 text-[11px] text-[#eee]">
      <label htmlFor={id}>{label}</label>
      <div className={"flex h-[19px] items-center rounded-[5px] bg-[#646464] pr-[5px] ring-1 ring-[#484848] " + w}>
        <select id={id} className="h-full min-w-0 flex-1 appearance-none bg-transparent pl-2 outline-none"><option>{value}</option></select>
        <UpDown />
      </div>
    </div>
  );
}

const TINT = { cyan: "bg-[#99a9a9]", green: "bg-[#99a99e]", sel: "bg-[#a9b8b8]" };

export default function App() {
  return (
    <div className="flex min-h-screen flex-col overflow-hidden bg-[#5e5e5e] font-['Inter','Liberation_Sans',sans-serif]">
      {/* Control bar */}
      <header className="relative flex h-[58px] items-center border-b-2 border-[#c4c4c4] bg-[#a2a2a2] px-[10px]">
        <Group items={[["library"], ["inspector", "bg-[#666] text-white"], ["help"], ["toolbar"]]} cell="w-[27px]" className="mr-[23px] pr-0.5" />
        <Group items={[["dial"], ["mixer"], ["pencil"]]} cell="w-[27px]" className="pr-0.5" />
        <div className="flex flex-1 items-center justify-center pl-[277px]">
          <Group items={[["rew"], ["ffw"], ["stop"], ["play", "bg-[#138a33] text-white"], ["rec"], ["cycle"]]} cell="w-[31px]" className="mr-[11px]" />
          <Lcd />
          <Group items={[["replace"], ["input"], ["speaker", "bg-[#138a33] text-white"], ["tuner"], ["plusminus"], ["fork"], ["solo"]]} cell="w-[27px]" className="ml-[11px] px-px" />
          <Group items={[["1234"], ["metro"]]} cell="w-[28px]" className="ml-[21px]" />
          <div className="relative ml-[183px] h-[18px] w-[118px] rounded-full bg-[#3c3c3c] ring-1 ring-[#c8c8c8]">
            {[5, 11].map((y) => (
              <div key={y} className="absolute left-[7px] flex h-[3px] w-[104px]" style={{ top: y }}>
                <div className="w-[79px] bg-[#2fe95f]" /><div className="w-[20px] bg-[#f5de2a]" /><div className="flex-1 bg-[#e22]" />
              </div>
            ))}
            <input type="range" aria-label="Master volume" min="0" max="100" step="any" defaultValue="69" className="absolute inset-0 m-0 h-full w-full appearance-none bg-transparent [&::-webkit-slider-thumb]:h-[14px] [&::-webkit-slider-thumb]:w-[14px] [&::-webkit-slider-thumb]:appearance-none [&::-webkit-slider-thumb]:rounded-full [&::-webkit-slider-thumb]:bg-[#e2e2da]" />
          </div>
        </div>
        <Group items={[["list"], ["note"], ["loop"], ["browser"]]} cell="w-[27px]" className="pl-0.5" />
        <div className="absolute right-1 top-1 h-[5px] w-[5px] rounded-full bg-[#ff7d12]" />
      </header>

      <div className="flex flex-1">
        {/* Inspector */}
        <aside className="flex w-[198px] shrink-0 flex-col border-r-[3px] border-[#181818] bg-[#5e5e5e]">
          <Heading open>Region: MIDI Defaults</Heading>
          <div className="flex h-[150px] flex-col">
            <Row label="Mute:" check dim={1} />
            <Row label="Loop:" check />
            <Row label="Quantize" labelSpin value="Off" spin />
            <Row label="Q-Swing:" />
            <Row label="Transpose:" spin />
            <Row label="-" value="-" dim={1} />
            <Row label="Pitch Source:" value="Off" spin dim={1} />
            <Row label="Velocity Offset:" />
            <button className="flex flex-1 items-center gap-[7px] bg-[#5a5a5a] pl-[6px] text-[10px] font-medium leading-none text-[#d0d0d0]"><ChevR w={8} />More</button>
          </div>
          <Heading h="h-[33px] border-t">Groups</Heading>
          <Heading open>Track:  Snare</Heading>
          <div className="flex h-[34px] items-center bg-[#5a5a5a] text-[10px] text-[#eaeaea]">
            <div className="w-[98px] text-right">Icon:</div>
            <div className="ml-[6px] flex"><Inst kind="snare" color={PAL.cyan.icon} big /></div>
          </div>
          <div className="flex h-[250px] flex-col border-b border-[#3c3c3c]">
            <Row wide label="Default Region Type:" value="MIDI" spin />
            <Row wide label="Channel:" value="Aux 8" spin dim={2} />
            <Row wide label="MIDI Input:" value="All" spin />
            <Row wide label="Internal MIDI In:" value="Off" spin />
            <Row wide label="MIDI In Channel:" value="All" spin />
            <Row wide label="MIDI Out Channel:" value="All" spin />
            <Row wide label="Transpose:" spin />
            <Row wide label="Velocity Offset:" />
            <Row wide label="Key Limit:" value="C-2  G8" />
            <Row wide label="Velocity Limit:" value="1   127" />
            <Row wide label="Delay" labelSpin />
            <Row wide label="No Transpose:" check />
            <Row wide label="No Reset:" check />
            <Row wide label="Staff Style:" value="Auto" spin />
            <Row wide label="Articulation Set:" value="None" spin />
          </div>
          <div className="flex flex-1">
            <Strip s={{ name: "Snare", input: "Bus 8", inserts: ["Channel EQ", "Compressor", "Pro-Q 3"], sends: ["B 23", "B 15", "B 17"], out: "Bus 13", vol: "-1.0", peak: "2.8", fader: 76 }} />
            <Strip s={{ name: "Drums", stereo: true, input: "Bus 13", inserts: ["SSLComp (s", "Channel EQ", "Compressor", "Pro-Q 3", "Channel EQ"], sends: ["Sends", "", ""], out: "Stereo Out", vol: "0.0", peak: "0.1", fader: 81 }} />
          </div>
        </aside>

        {/* Tracks area */}
        <main className="flex min-w-0 flex-1 flex-col">
          <div className="flex h-[31px] items-center bg-[#525252] pl-[7px] pr-[8px]">
            <div className={tool + "mr-[7px] opacity-70"}><TB k="up" /></div>
            <div className={tool}>
              {[["Edit", "w-[50px]"], ["Functions", "w-[79px]"], ["View", "w-[55px]"]].map(([n, w]) => (
                <button key={n} className={"flex items-center justify-between border-l border-[#505050] pl-[8px] pr-[6px] text-[11px] font-medium first:border-l-0 " + w}>{n}<ChevD w={7} /></button>
              ))}
            </div>
            <div className={tool + "ml-[7px]"}><TB k="grid" /><TB k="blocks" on /></div>
            <div className={tool + "ml-[7px]"}><TB k="auto" w="w-[26px]" /><TB k="flex" w="w-[26px]" /></div>
            <div className={tool + "ml-[8px]"}><TB k="catch" /></div>
            <div className="flex flex-1 justify-center pl-[146px]">
              <div className={tool}>
                <button aria-label="Left-click tool" className="flex w-[35px] items-center justify-center">{G.arrow}<ChevD w={6} /></button>
                <button aria-label="Command-click tool" className="flex w-[35px] items-center justify-center border-l border-[#505050]">{G.marquee}<ChevD w={6} /></button>
              </div>
            </div>
            <Pick label="Snap:" value="Smart" w="w-[135px]" />
            <div className="w-[9px]" />
            <Pick label="Drag:" value="No Overlap" w="w-[84px]" />
            <div className={tool + "ml-[8px]"}><TB k="wave" w="w-[25px]" /></div>
            <div className={tool + "ml-[8px]"}><TB k="vzoom" on w="w-[26px]" /><TB k="hzoom" w="w-[26px]" /></div>
            <div className="ml-[7px] flex h-[19px] items-center rounded-[5px] bg-[#464646] text-[#e4e4e4]">
              {[["Vertical zoom", 34], ["Horizontal zoom", 4]].map(([n, v], i) => (
                <div key={n} className="flex h-full w-[62px] items-center gap-[3px] border-l border-[#5a5a5a] px-[5px] first:border-l-0">
                  <S w={9} vb="0 0 10 10" className={i ? "rotate-90" : ""}><path d="M5 1v8M3 3l2-2 2 2M3 7l2 2 2-2" /></S>
                  <input type="range" aria-label={n} min="0" max="100" defaultValue={v} className="m-0 h-[4px] min-w-0 flex-1 appearance-none rounded-full bg-[#3a3a3a] [&::-webkit-slider-thumb]:h-[11px] [&::-webkit-slider-thumb]:w-[10px] [&::-webkit-slider-thumb]:appearance-none [&::-webkit-slider-thumb]:rounded-full [&::-webkit-slider-thumb]:bg-[#b4b4b4]" />
                </div>
              ))}
            </div>
          </div>

          <div className="flex min-w-0 flex-1">
            {/* Track headers */}
            <div className="flex w-[270px] shrink-0 flex-col border-r-2 border-[#181818]">
              <div className="flex h-[31px] items-center border-b border-[#444] bg-[#525252] px-[7px]">
                <div className={tool}><TB k="plus" /></div>
                <div className={tool + "ml-[9px]"}><TB k="dup" /></div>
                <div className={tool + "ml-[9px]"}><button className="w-[27px] text-[12px] font-semibold">S</button></div>
                <div className={tool + "ml-auto"}><TB k="hide" /></div>
              </div>
              {TRACKS.map((t, i) => <TrackHeader key={t.n} t={t} first={t.child && TRACKS[i - 1].open} />)}
            </div>
            {/* Divider column */}
            <div className="flex w-[22px] shrink-0 flex-col bg-[#5c5c5c]">
              <button aria-label="Resize headers" className="flex h-[31px] items-center justify-center border-b border-[#444] bg-[#525252] text-white">
                <S w={14} h={9} vb="0 0 14 9" sw={1}><path d="M6 1v7L1 4.500z" /><path d="M8 1v7l5-3.500z" fill="currentColor" /></S>
              </button>
              {TRACKS.map((t) => <div key={t.n} className={"h-[59px] border-b border-[#363636] " + (t.sel ? "bg-[#707070]" : "bg-[#5c5c5c]")} />)}
              <div className="flex-1 bg-[#666]" />
              <div className="flex h-[37px] items-center justify-center bg-[#4e4e4e]"><div className="h-[9px] w-[9px] bg-white" /></div>
            </div>
            {/* Timeline */}
            <div className="relative flex min-w-0 flex-1 flex-col overflow-hidden bg-[#b1b1b1]">
              <div className="relative h-[31px] overflow-hidden border-b border-[#2e2e2e] bg-[#404040]">
                <div className="absolute top-px h-[15px] bg-[#626262]" style={{ left: 880, width: 32 }} />
                <svg className="absolute left-0 top-0" width="2010" height="31" aria-hidden="true">
                  <rect y="16" width="2010" height="15" fill="#3a3a3a" />
                  <path d="M0 16.500H2010" stroke="#2c2c2c" />
                  <path d={BARS.map((b) => `M${barX(b) + 0.5} ${(b - 1) % 8 ? 17 : 2}V31`).join("")} stroke="#7c7c7c" />
                  <path d="M0 3l6 5-6 5" fill="none" stroke="#888" />
                </svg>
                {BARS.filter((b) => (b - 1) % 8 === 0).map((b) => (
                  <span key={b} className="absolute top-0 text-[11px] font-medium leading-[14px] text-[#e2e2e2]" style={{ left: barX(b) + 3 }}>{b}</span>
                ))}
              </div>
              <div className="relative">
                {TRACKS.map((t) => <div key={t.n} className={"h-[59px] border-b border-black/10 " + (t.tint ? TINT[t.tint] : "bg-[#b1b1b1]")} />)}
                <svg className="absolute inset-0 h-full w-full" aria-hidden="true">
                  <path d={BARS.map((b) => `M${barX(b) + 0.5} 0V1180`).join("")} stroke="#ffffff" strokeOpacity=".3" />
                  <path d={BARS.map((b) => `M${barX(b) - 1.5} 0V1180`).join("")} stroke="#000000" strokeOpacity=".05" />
                </svg>
                <div className="absolute inset-0 flex flex-col">
                  {TRACKS.map((t) => (
                    <div key={t.n} className="relative h-[59px]">
                      {t.stack && [0, 1, 2].map((k) => (
                        <span key={k} className={"absolute top-[23px] whitespace-nowrap text-[10px] font-semibold leading-[13px] " + (t.pal === "cyan" ? "text-[#7df6f4]" : "text-[#8df5a6]")} style={{ left: 7 + k * TILE }}>{t.stack}</span>
                      ))}
                      {t.regions.map((r) => <Region key={r.x0} r={r} pal={t.pal} />)}
                    </div>
                  ))}
                </div>
              </div>
              <div className="absolute inset-y-0 left-0 top-[31px] w-[3px] bg-white/15" />
              {/* Playhead */}
              <div className="absolute bottom-0 top-[16px] flex w-[15px] flex-col items-center" style={{ left: 986 }}>
                <svg width="15" height="15" viewBox="0 0 15 15" aria-hidden="true"><path d="M1.500 1h12v8L9 14H6L1.500 9z" fill="#c8c8c8" stroke="#6e6e6e" /><path d="M7.500 3v9" stroke="#777" /></svg>
                <div className="w-[2px] flex-1 border-r border-white/60 bg-[#222]" />
              </div>
            </div>
          </div>
        </main>
      </div>
    </div>
  );
}
